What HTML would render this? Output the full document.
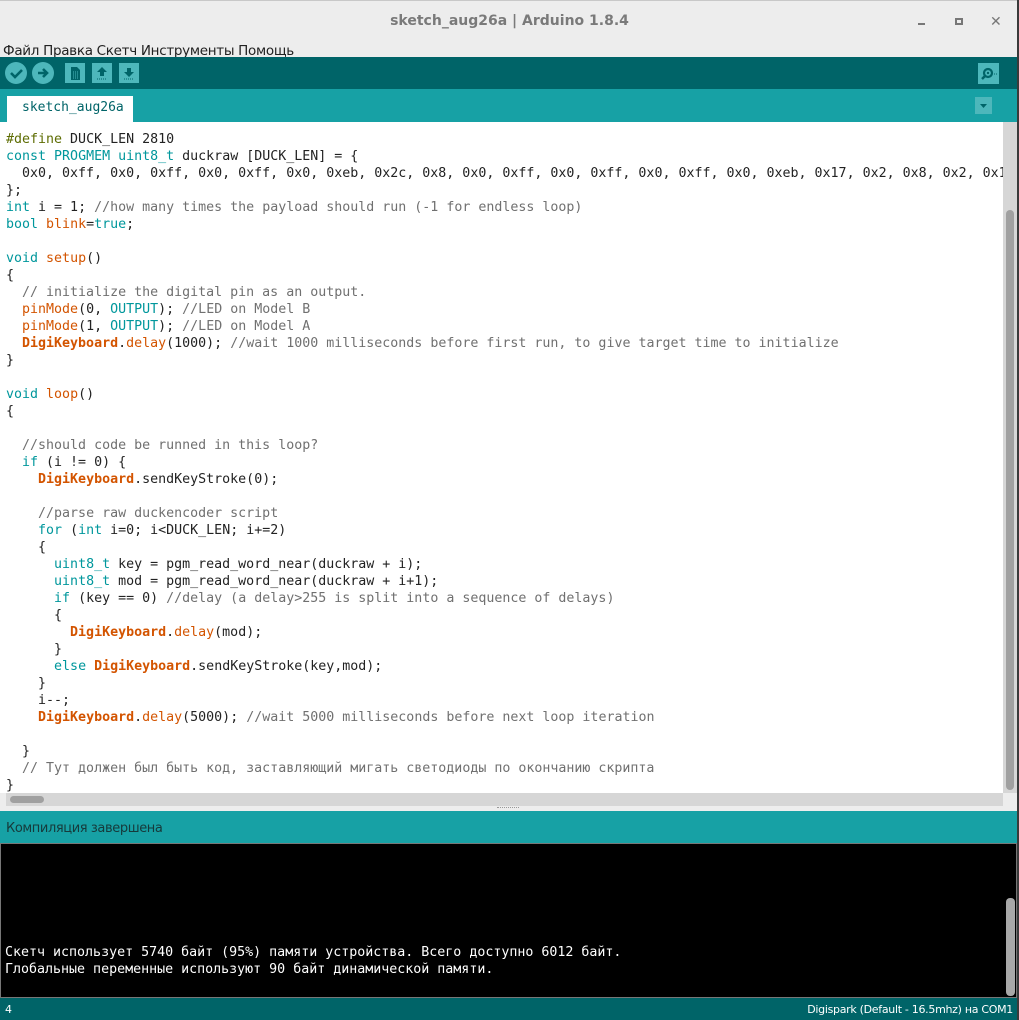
<!DOCTYPE html>
<html><head><meta charset="utf-8"><style>
*{margin:0;padding:0;box-sizing:border-box}
body{width:1019px;height:1020px;overflow:hidden;background:#ededed;font-family:"Liberation Sans","DejaVu Sans",sans-serif;position:relative}
.abs{position:absolute}
#title{left:0;top:0;width:1019px;height:40px;background:#ededed;border-top:1px solid #c8c8c8}
#title .t{left:0;width:1019px;top:12px;text-align:center;font-size:14px;font-weight:bold;color:#7a7a7a;font-family:"DejaVu Sans",sans-serif}
#menu{left:3px;top:43px;font-size:13.5px;color:#222;font-family:"DejaVu Sans",sans-serif;letter-spacing:-0.3px}
#tool{left:0;top:57px;width:1017px;height:32px;background:#006468}
#tabs{left:0;top:89px;width:1017px;height:33px;background:#17a1a5}
#tab{left:7px;top:96px;width:126px;height:26px;background:#fff;font-family:"DejaVu Sans Mono",monospace;font-size:13px;color:#006468;padding:4px 0 0 15px}
#editor{left:0;top:122px;width:1017px;height:671px;background:#fff;overflow:hidden}
pre{font-family:"DejaVu Sans Mono","Liberation Mono",monospace;font-size:13.3px;line-height:17px;color:#222}
#code{left:6px;top:9px;white-space:pre}
.k{color:#00979c}.p{color:#5e6d03}.o{color:#d35400}.b{color:#d35400;font-weight:bold}.c{color:#707070}
#vs{left:1003px;top:122px;width:14px;height:671px;background:#d6d6d6}
#vth{left:1006px;top:210px;width:8px;height:580px;background:#a0a0a0;border-radius:4px}
#hs{left:6px;top:793px;width:997px;height:13px;background:#d6d6d6}
#hth{left:10px;top:796px;width:34px;height:7px;background:#a0a0a0;border-radius:4px}
#status{left:0;top:811px;width:1017px;height:32px;background:#17a1a5;color:#163a3b;font-size:13px;padding:10px 0 0 6px;font-family:"DejaVu Sans",sans-serif;letter-spacing:-0.4px}
#cons{left:0;top:843px;width:1017px;height:155px;background:#000;border:1px solid #777}
#cons pre{color:#fff;position:absolute;left:4px;top:100px;font-size:13.3px;line-height:17px}
#cvth{left:1006px;top:898px;width:9px;height:98px;background:#a8a8a8;border-radius:4px}
#bot{left:0;top:998px;width:1017px;height:22px;background:#006468;color:#fff;font-size:11px;font-family:"DejaVu Sans",sans-serif}
#rb{left:1017px;top:0;width:2px;height:1020px;background:#3a3a3a}
.btn{position:absolute;background:#4db7bb}
</style></head><body>
<div id="title" class="abs"><div class="t abs">sketch_aug26a | Arduino 1.8.4</div>
<div class="abs" style="left:918px;top:22px;width:7px;height:2px;background:#777"></div>
<div class="abs" style="left:955px;top:17px;width:8px;height:7px;border:2px solid #777"></div>
<div class="abs" style="left:990px;top:12px;font-size:14px;color:#777;font-weight:bold">✕</div>
</div>
<div id="menu" class="abs">Файл Правка Скетч Инструменты Помощь</div>
<div id="tool" class="abs">
<div class="btn" style="left:5px;top:5px;width:22px;height:22px;border-radius:50%"></div>
<svg class="abs" style="left:5px;top:5px" width="22" height="22"><path d="M6 11l4 4 7-7" stroke="#006468" stroke-width="2.6" fill="none"/></svg>
<div class="btn" style="left:32px;top:5px;width:22px;height:22px;border-radius:50%"></div>
<svg class="abs" style="left:32px;top:5px" width="22" height="22"><path d="M6 11h8M11 7l4 4-4 4" stroke="#006468" stroke-width="2.6" fill="none"/></svg>
<div class="btn" style="left:65px;top:6px;width:20px;height:20px"></div>
<svg class="abs" style="left:65px;top:6px" width="20" height="20"><path d="M6 4h6l3 3v10H6z" fill="#006468"/><path d="M8 9h5M8 11h5M8 13h5M8 15h5" stroke="#4db7bb" stroke-width="1" stroke-dasharray="1 1"/></svg>
<div class="btn" style="left:92px;top:6px;width:20px;height:20px"></div>
<svg class="abs" style="left:92px;top:6px" width="20" height="20"><path d="M10 4l-5 5h3v4h4V9h3z" fill="#006468"/><path d="M5 16h10" stroke="#006468" stroke-dasharray="1 1"/></svg>
<div class="btn" style="left:119px;top:6px;width:20px;height:20px"></div>
<svg class="abs" style="left:119px;top:6px" width="20" height="20"><path d="M10 14l-5-5h3V5h4v4h3z" fill="#006468"/><path d="M5 16h10" stroke="#006468" stroke-dasharray="1 1"/></svg>
<div class="btn" style="left:978px;top:6px;width:21px;height:21px"></div>
<svg class="abs" style="left:978px;top:6px" width="21" height="21"><circle cx="10" cy="10" r="4" stroke="#006468" stroke-width="2.2" fill="none"/><path d="M7 13l-3 3" stroke="#006468" stroke-width="2.5"/><circle cx="10" cy="10" r="1.2" fill="#006468"/><path d="M16 11h4" stroke="#006468" stroke-dasharray="1 1"/></svg>
</div>
<div id="tabs" class="abs">
<div class="abs" style="left:975px;top:8px;width:17px;height:17px;background:#4db7bb"></div>
<svg class="abs" style="left:975px;top:8px" width="17" height="17"><path d="M5 7h7l-3.5 4z" fill="#006468"/></svg>
</div>
<div id="tab" class="abs">sketch_aug26a</div>
<div id="editor" class="abs"><pre id="code" class="abs"><span class="p">#define</span> DUCK_LEN 2810
<span class="k">const</span> <span class="k">PROGMEM</span> <span class="k">uint8_t</span> duckraw [DUCK_LEN] = {
  0x0, 0xff, 0x0, 0xff, 0x0, 0xff, 0x0, 0xeb, 0x2c, 0x8, 0x0, 0xff, 0x0, 0xff, 0x0, 0xff, 0x0, 0xeb, 0x17, 0x2, 0x8, 0x2, 0x1
};
<span class="k">int</span> i = 1; <span class="c">//how many times the payload should run (-1 for endless loop)</span>
<span class="k">bool</span> <span class="o">blink</span>=<span class="k">true</span>;

<span class="k">void</span> <span class="o">setup</span>()
{
  <span class="c">// initialize the digital pin as an output.</span>
  <span class="o">pinMode</span>(0, <span class="k">OUTPUT</span>); <span class="c">//LED on Model B</span>
  <span class="o">pinMode</span>(1, <span class="k">OUTPUT</span>); <span class="c">//LED on Model A</span>
  <span class="b">DigiKeyboard</span>.<span class="o">delay</span>(1000); <span class="c">//wait 1000 milliseconds before first run, to give target time to initialize</span>
}

<span class="k">void</span> <span class="o">loop</span>()
{

  <span class="c">//should code be runned in this loop?</span>
  <span class="k">if</span> (i != 0) {
    <span class="b">DigiKeyboard</span>.sendKeyStroke(0);

    <span class="c">//parse raw duckencoder script</span>
    <span class="k">for</span> (<span class="k">int</span> i=0; i&lt;DUCK_LEN; i+=2)
    {
      <span class="k">uint8_t</span> key = pgm_read_word_near(duckraw + i);
      <span class="k">uint8_t</span> mod = pgm_read_word_near(duckraw + i+1);
      <span class="k">if</span> (key == 0) <span class="c">//delay (a delay&gt;255 is split into a sequence of delays)</span>
      {
        <span class="b">DigiKeyboard</span>.<span class="o">delay</span>(mod);
      }
      <span class="k">else</span> <span class="b">DigiKeyboard</span>.sendKeyStroke(key,mod);
    }
    i--;
    <span class="b">DigiKeyboard</span>.<span class="o">delay</span>(5000); <span class="c">//wait 5000 milliseconds before next loop iteration</span>

  }
  <span class="c">// Тут должен был быть код, заставляющий мигать светодиоды по окончанию скрипта</span>
}</pre></div>
<div id="vs" class="abs"></div><div id="vth" class="abs"></div>
<div id="hs" class="abs"></div><div id="hth" class="abs"></div>
<div class="abs" style="left:0;top:806px;width:1017px;height:5px;background:#ededed"></div>
<div class="abs" style="left:497px;top:807px;width:22px;height:1px;border-top:1px dotted #999"></div>
<div id="status" class="abs">Компиляция завершена</div>
<div id="cons" class="abs"><pre>Скетч использует 5740 байт (95%) памяти устройства. Всего доступно 6012 байт.
Глобальные переменные используют 90 байт динамической памяти.</pre></div>
<div id="cvth" class="abs"></div>
<div id="bot" class="abs"><span class="abs" style="left:5px;top:5px">4</span><span class="abs" style="right:4px;top:5px;letter-spacing:-0.3px">Digispark (Default - 16.5mhz) на COM1</span></div>
<div id="rb" class="abs"></div>
</body></html>
